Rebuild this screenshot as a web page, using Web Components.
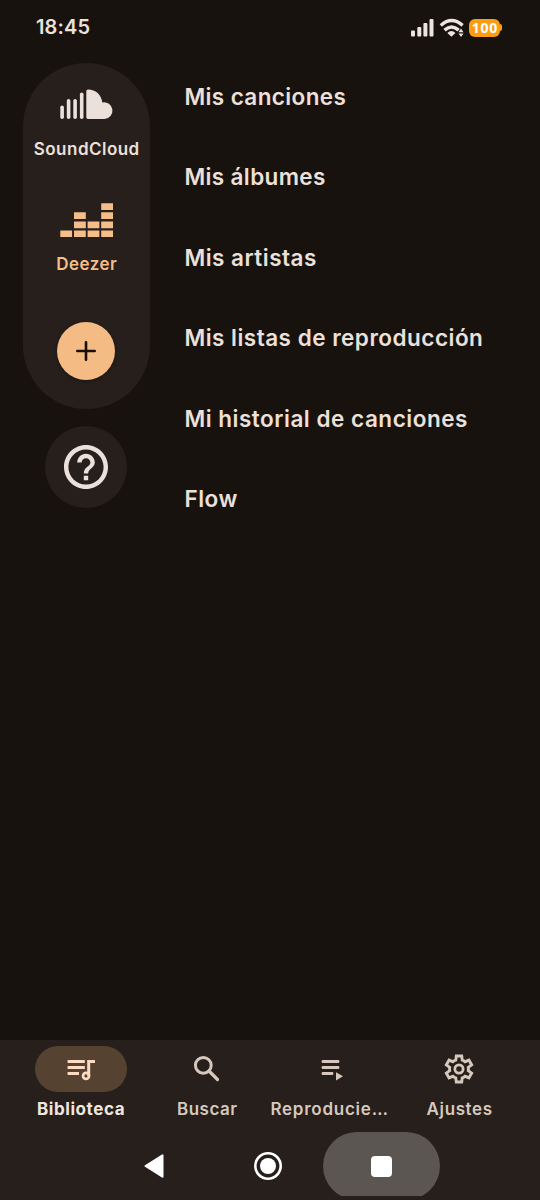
<!DOCTYPE html>
<html lang="es">
<head>
<meta charset="utf-8">
<meta name="viewport" content="width=device-width">
<title>Biblioteca</title>
<style>
html,body{margin:0;background:#17120d}
body{font-family:Inter,Roboto,sans-serif;color:#ece0da}
</style>
</head>
<body>
<music-app></music-app>
<script>
const define = (name, html, setup) => customElements.define(name, class extends HTMLElement {
  connectedCallback() {
    if (this.shadowRoot) return;
    const t = document.createElement('template');
    t.innerHTML = html;
    this.attachShadow({mode: 'open'}).appendChild(t.content.cloneNode(true));
    if (setup) setup(this, this.shadowRoot);
  }
});

/* Label tracked out to a given width. */
define('tracked-text', `<style>:host{display:block;white-space:nowrap;width:max-content}span{display:inline-block}</style><span><slot></slot></span>`, (el, root) => {
  const s = root.querySelector('span');
  const n = el.textContent.length;
  const extra = (Number(el.getAttribute('width')) - s.getBoundingClientRect().width) / (n - 1);
  s.style.letterSpacing = extra.toFixed(3) + 'px';
  s.style.marginRight = (-extra).toFixed(3) + 'px';
});

define('status-bar', `<style>
:host{display:flex;height:54px;box-sizing:border-box;padding:0 38px 0 36px;align-items:center;justify-content:space-between;flex:none}
tracked-text{font-size:20px;font-weight:600;line-height:54px}
.r{display:flex;align-items:center;padding-top:1px}
svg{display:block}
.b{width:31px;height:18px;border-radius:6px;background:#fb9d14;color:#fff;display:flex;align-items:center;justify-content:center;margin-left:6px}
.b tracked-text{font:700 14px/18px "Open Sans",sans-serif}
.tip{width:2px;height:7px;border-radius:0 2px 2px 0;background:#fb9d14}
</style>
<tracked-text width="54">18:45</tracked-text>
<div class="r">
<svg width="53" height="20" viewBox="411 18 53 20" fill="#ece4df"><rect x="411" y="30.5" width="4" height="6" rx="1"/><rect x="417.3" y="27" width="4" height="9.5" rx="1"/><rect x="423.4" y="23" width="4" height="13.5" rx="1"/><rect x="429.5" y="19" width="4" height="17.5" rx="1"/>
<g fill="none" stroke="#ece4df" stroke-width="3.4"><path d="M440.8 25.4Q451.6 15.800 462.600 25.4"/><path d="M444.5 30.1Q451.6 24 458.7 30.1"/></g><path d="M447.3 32.9Q451.4 29.300 455.5 32.9L451.4 36.8Z"/><path d="M458.5 32.200 461 28.6 463.5 32.200ZM458.5 33.4H463.5L461 37Z"/></svg>
<div class="b" style="margin-left:5px"><tracked-text width="25.5">100</tracked-text></div><div class="tip"></div></div>`);

define('service-item', `<style>
:host{display:flex;flex-direction:column;align-items:center;height:115px;box-sizing:border-box;padding-top:24.3px}
.i{height:34px;display:flex;align-items:center}
.t{font-size:17px;font-weight:600;line-height:20px;margin-top:18px}
</style><div class="i"><slot name="icon"></slot></div><div class="t"><slot></slot></div>`);

define('service-rail', `<style>
:host{display:flex;flex-direction:column;align-items:center;width:127px;gap:17px;flex:none}
.p{width:127px;height:345.5px;background:#261f1b;border-radius:63.5px;display:flex;flex-direction:column}
svg{display:block}
.d{color:#f5bd88}
button{border:0;padding:0;border-radius:50%;display:flex;align-items:center;justify-content:center}
.add{width:58px;height:58px;background:#f5bb85;margin:29px 0 0 34px;box-shadow:0 1px 4px #0004}
.help{width:82px;height:82px;background:#261f1b;margin-right:1px}
</style>
<div class="p">
<service-item><svg slot="icon" width="54" height="32" viewBox="60 88 54 32" fill="#ece0da"><rect x="60.3" y="105.5" width="3.6" height="13.5" rx="1.8"/><rect x="66.8" y="99" width="3.6" height="20" rx="1.8"/><rect x="73.3" y="99" width="3.6" height="20" rx="1.8"/><rect x="79.9" y="92.5" width="3.6" height="26.5" rx="1.8"/><path d="M86.3 91.2Q86.3 89.4 88 89.4C95.5 89.4 101.5 94.6 102.3 102.4A8.4 8.4 0 1 1 104.5 119H88Q86.3 119 86.3 117.3Z"/></svg><tracked-text width="105.5">SoundCloud</tracked-text></service-item>
<service-item class="d"><svg slot="icon" width="53" height="35" viewBox="60 201 53 35" fill="#f5bd88"><path d="M60.3 229.400h11.8v6.600H60.3zM74 229.400h11.8v6.600H74zM87.6 229.400h11.8v6.600H87.6zM101.2 229.400h11.8v6.600h-11.8zM74 220.400h11.8v6.800H74zM87.6 220.400h11.8v6.800H87.6zM101.2 220.400h11.8v6.800h-11.8zM74 211.300h11.8v6.800H74zM101.2 211.300h11.8v6.800h-11.8zM101.2 202.200h11.8v6.800h-11.8z"/></svg><tracked-text width="60.5">Deezer</tracked-text></service-item>
<button class="add" aria-label="Añadir"><svg width="20" height="20" stroke="#17100a" stroke-width="2.6" stroke-linecap="round"><path d="M10 1.3V18.7M1.3 10H18.7"/></svg></button>
</div>
<button class="help" aria-label="Ayuda"><svg width="44" height="44" viewBox="2 2 20 20" fill="#ece0da"><path d="M11 18h2v-2h-2v2zm1-16C6.48 2 2 6.480 2 12s4.480 10 10 10 10-4.480 10-10S17.520 2 12 2zm0 18c-4.410 0-8-3.590-8-8s3.590-8 8-8 8 3.590 8 8-3.590 8-8 8zm0-14c-2.210 0-4 1.790-4 4h2c0-1.100.9-2 2-2s2 .9 2 2c0 2-3 1.750-3 5h2c0-2.250 3-2.500 3-5 0-2.210-1.790-4-4-4z"/></svg></button>`);

define('library-list', `<style>
:host{display:flex;flex-direction:column;padding-left:34.400px}
tracked-text{font-size:22.5px;font-weight:600;line-height:80.4px}
</style>
<tracked-text width="161.5">Mis canciones</tracked-text>
<tracked-text width="141">Mis álbumes</tracked-text>
<tracked-text width="132">Mis artistas</tracked-text>
<tracked-text width="298.5">Mis listas de reproducción</tracked-text>
<tracked-text width="283">Mi historial de canciones</tracked-text>
<tracked-text width="53">Flow</tracked-text>`);

define('nav-item', `<style>
:host{display:flex;flex-direction:column;align-items:center;width:126.2px;color:#d7c8bd;font-size:17px;font-weight:600}
:host([active]){color:#f2e6df;font-weight:700}
.i{width:92px;height:46px;border-radius:23px;display:flex;align-items:center;justify-content:center}
:host([active]) .i{background:#554231}
.t{line-height:20px;margin-top:7.4px}
</style><div class="i"><slot name="icon"></slot></div><div class="t"><slot></slot></div>`);

define('nav-bar', `<style>
:host{display:flex;box-sizing:border-box;height:92px;padding:6px 0 0 17.7px;background:#261f1b;flex:none}
svg{display:block}
.long{margin-right:8px}
</style>
<nav-item active><svg slot="icon" width="30" height="30" viewBox="66 1054 30 30" fill="#fbdcc2"><path d="M67.600 1060h17.200v3H67.600zM67.600 1066h17.200v3H67.600zM67.600 1072h11.400v3H67.600z"/><path d="M87.200 1060H95V1063H90.200V1076H87.200Z"/><circle cx="86" cy="1075.900" r="3" fill="none" stroke="#fbdcc2" stroke-width="2.700"/></svg><tracked-text width="87.5">Biblioteca</tracked-text></nav-item>
<nav-item><svg slot="icon" width="30" height="30" viewBox="192 1054 30 30" fill="none" stroke="#d7c8bd" stroke-width="3"><circle cx="203.300" cy="1065.300" r="7.900"/><path d="M209 1071 217.500 1079.500" stroke-width="3.200" stroke-linecap="round"/></svg><tracked-text width="60">Buscar</tracked-text></nav-item>
<nav-item><svg slot="icon" width="30" height="30" viewBox="318 1054 30 30" fill="#d7c8bd"><rect x="321.600" y="1060" width="17.800" height="2.900" rx="1.200"/><rect x="321.600" y="1066" width="17.800" height="2.900" rx="1.200"/><rect x="321.600" y="1072" width="11.800" height="2.900" rx="1.200"/><path d="M336 1072.300 343 1076.300 336 1080.600Z"/></svg><tracked-text class="long" width="117.5">Reproducie…</tracked-text></nav-item>
<nav-item><svg slot="icon" width="30" height="30" viewBox="66 -894 828 828" fill="#d7c8bd"><path d="m370-80-16-128q-13-5-24.500-12T307-235l-119 50L78-375l103-78q-1-7-1-13.500v-27q0-6.500 1-13.500L78-585l110-190 119 50q11-8 23-15t24-12l16-128h220l16 128q13 5 24.500 12t22.500 15l119-50 110 190-103 78q1 7 1 13.500v27q0 6.500-2 13.500l103 78-110 190-118-50q-11 8-23 15t-24 12L590-80H370Zm70-80h79l14-106q31-8 57.500-23.500T639-327l99 41 39-68-86-65q5-14 7-29.500t2-31.500q0-16-2-31.500t-7-29.500l86-65-39-68-99 42q-22-23-48.500-38.500T533-694l-13-106h-79l-14 106q-31 8-57.500 23.500T321-633l-99-41-39 68 86 64q-5 15-7 30t-2 32q0 16 2 31t7 30l-86 65 39 68 99-42q22 23 48.500 38.500T427-266l13 106Z"/><circle cx="480" cy="-480" r="114" fill="none" stroke="#d7c8bd" stroke-width="76"/></svg><tracked-text width="65.5">Ajustes</tracked-text></nav-item>`);

define('system-bar', `<style>
:host{display:flex;height:68px;background:#261f1b;align-items:flex-start;flex:none;padding-left:95px}
div{width:117px;height:68px;display:flex;align-items:center;justify-content:center;margin-right:-3px}
.clip{height:64px;overflow:hidden;display:block;margin-right:0}
.pill{background:#5b5651;border-radius:34px;margin:0}
svg{display:block}
</style>
<div><svg width="20" height="24" fill="#fff" stroke="#fff" stroke-width="2" stroke-linejoin="round"><path d="M1.500 12 18.500 1.300V22.700Z"/></svg></div>
<div><svg width="28" height="28"><circle cx="14" cy="14" r="12.700" fill="none" stroke="#fff" stroke-width="2.600"/><circle cx="14" cy="14" r="8" fill="#fff"/></svg></div>
<div class="clip"><div class="pill"><svg width="21" height="21"><rect width="21" height="21" rx="4" fill="#fff"/></svg></div></div>`);

define('music-app', `<style>
:host{display:flex;flex-direction:column;width:540px;height:1200px;background:#17120d;overflow:hidden}
main{display:flex;flex:1;padding-left:23px;align-items:flex-start}
service-rail{margin-top:9px}
library-list{margin-top:2.900px}
</style><status-bar></status-bar><main><service-rail></service-rail><library-list></library-list></main><nav-bar></nav-bar><system-bar></system-bar>`);
</script>
</body>
</html>
